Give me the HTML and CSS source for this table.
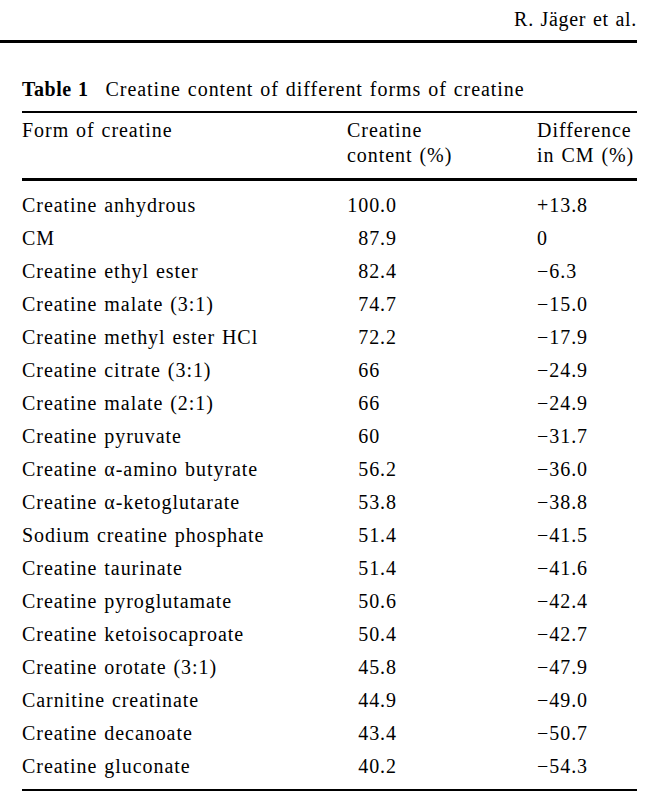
FILE: index.html
```html
<!DOCTYPE html>
<html lang="en">
<head>
<meta charset="utf-8">
<title>Table 1</title>
<link rel="stylesheet" href="styles.css">
</head>
<body>
<div class="page">
  <header class="running-head">
    <div class="running-text">R. Jäger et al.</div>
  </header>
  <section class="table-block">
    <div class="caption"><span class="caption-label">Table 1</span>Creatine content of different forms of creatine</div>
    <div class="thead">
      <div class="c1">Form of creatine</div>
      <div class="c2">Creatine<br>content (%)</div>
      <div class="c3">Difference<br>in CM (%)</div>
    </div>
    <div class="tbody">
      <div class="row"><div class="c1">Creatine anhydrous</div><div class="c2"><span class="num">100.0</span></div><div class="c3">+13.8</div></div>
      <div class="row"><div class="c1">CM</div><div class="c2"><span class="num">87.9</span></div><div class="c3">0</div></div>
      <div class="row"><div class="c1">Creatine ethyl ester</div><div class="c2"><span class="num">82.4</span></div><div class="c3">−6.3</div></div>
      <div class="row"><div class="c1">Creatine malate (3:1)</div><div class="c2"><span class="num">74.7</span></div><div class="c3">−15.0</div></div>
      <div class="row"><div class="c1">Creatine methyl ester HCl</div><div class="c2"><span class="num">72.2</span></div><div class="c3">−17.9</div></div>
      <div class="row"><div class="c1">Creatine citrate (3:1)</div><div class="c2"><span class="num">66<span class="pad">.0</span></span></div><div class="c3">−24.9</div></div>
      <div class="row"><div class="c1">Creatine malate (2:1)</div><div class="c2"><span class="num">66<span class="pad">.0</span></span></div><div class="c3">−24.9</div></div>
      <div class="row"><div class="c1">Creatine pyruvate</div><div class="c2"><span class="num">60<span class="pad">.0</span></span></div><div class="c3">−31.7</div></div>
      <div class="row"><div class="c1">Creatine α-amino butyrate</div><div class="c2"><span class="num">56.2</span></div><div class="c3">−36.0</div></div>
      <div class="row"><div class="c1">Creatine α-ketoglutarate</div><div class="c2"><span class="num">53.8</span></div><div class="c3">−38.8</div></div>
      <div class="row"><div class="c1">Sodium creatine phosphate</div><div class="c2"><span class="num">51.4</span></div><div class="c3">−41.5</div></div>
      <div class="row"><div class="c1">Creatine taurinate</div><div class="c2"><span class="num">51.4</span></div><div class="c3">−41.6</div></div>
      <div class="row"><div class="c1">Creatine pyroglutamate</div><div class="c2"><span class="num">50.6</span></div><div class="c3">−42.4</div></div>
      <div class="row"><div class="c1">Creatine ketoisocaproate</div><div class="c2"><span class="num">50.4</span></div><div class="c3">−42.7</div></div>
      <div class="row"><div class="c1">Creatine orotate (3:1)</div><div class="c2"><span class="num">45.8</span></div><div class="c3">−47.9</div></div>
      <div class="row"><div class="c1">Carnitine creatinate</div><div class="c2"><span class="num">44.9</span></div><div class="c3">−49.0</div></div>
      <div class="row"><div class="c1">Creatine decanoate</div><div class="c2"><span class="num">43.4</span></div><div class="c3">−50.7</div></div>
      <div class="row"><div class="c1">Creatine gluconate</div><div class="c2"><span class="num">40.2</span></div><div class="c3">−54.3</div></div>
    </div>
  </section>
</div>
</body>
</html>
```

FILE: styles.css
```css
html, body {
  margin: 0;
  padding: 0;
  background: #ffffff;
}

body {
  font-family: "Liberation Serif", "Times New Roman", serif;
  font-size: 20px;
  color: #000000;
  letter-spacing: 0.95px;
  word-spacing: 1px;
}

.page {
  width: 670px;
}

.running-head {
  width: 637px;
  padding-top: 8px;
  border-bottom: 3px solid #000000;
}

.running-text {
  text-align: right;
  line-height: 22px;
  padding-bottom: 10px;
  letter-spacing: 0.7px;
}

.table-block {
  margin-left: 22px;
  width: 615px;
  padding-top: 35px;
}

.caption {
  line-height: 22px;
  padding-bottom: 11px;
  border-bottom: 2px solid #000000;
}

.caption-label {
  font-weight: bold;
  margin-right: 17px;
  letter-spacing: 0.5px;
}

.thead {
  display: grid;
  grid-template-columns: 325px 190px 100px;
  line-height: 25px;
  padding-top: 5px;
  padding-bottom: 10px;
  border-bottom: 3px solid #000000;
}

.tbody {
  padding-top: 8px;
  padding-bottom: 6px;
  border-bottom: 2px solid #000000;
}

.row {
  display: grid;
  grid-template-columns: 325px 190px 100px;
  height: 33px;
  line-height: 33px;
}

.num {
  display: inline-block;
  width: 52px;
  margin-left: -2px;
  text-align: right;
}

.pad {
  visibility: hidden;
}

.c3 {
  white-space: nowrap;
}
```
